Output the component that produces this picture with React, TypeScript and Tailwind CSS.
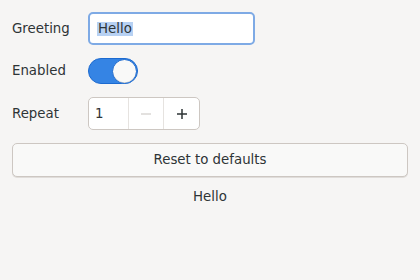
export default function App() {
  const font = { fontFamily: '"DejaVu Sans", sans-serif' };
  return (
    <div
      className="w-[420px] h-[280px] bg-[#f6f5f4] text-[#2e3436] text-[13.33px] px-3 pt-3"
      style={font}
    >
      <div className="grid grid-cols-[76px_1fr] gap-y-[13px] items-center">
        <span>Greeting</span>
        <div className="w-[167px] h-[33px] rounded-[5px] border-2 border-[#7eaae5] bg-white flex items-center pl-[7px]">
          <span className="bg-[#b7d1f3] leading-[14px] py-[0px] px-[1px]">Hello</span>
        </div>

        <span>Enabled</span>
        <div className="w-[50px] h-[26px] rounded-full bg-[#3584e4] border border-[#1c6ad0] flex items-center justify-end">
          <div className="w-[25px] h-[25px] rounded-full bg-[#f9f9f8] border border-[#1c6ad0] shadow-[inset_0_-1px_0_#d8d6d3]" />
        </div>

        <span>Repeat</span>
        <div className="w-[112px] h-[33px] rounded-[5px] border border-[#cdc7c2] bg-white flex">
          <div className="w-[40px] flex items-center pl-[6px] border-r border-[#e6e3e0]">1</div>
          <div className="w-[35px] flex items-center justify-center border-r border-[#e6e3e0]">
            <svg width="12" height="12" viewBox="0 0 12 12">
              <path d="M1 6h10" stroke="#dad7d4" strokeWidth="1.5" />
            </svg>
          </div>
          <div className="flex-1 flex items-center justify-center">
            <svg width="12" height="12" viewBox="0 0 12 12">
              <path d="M1 6h10M6 1v10" stroke="#2e3436" strokeWidth="1.5" />
            </svg>
          </div>
        </div>
      </div>

      <button className="mt-[13px] w-[396px] h-[34px] rounded-[5px] border border-[#cdc7c2] bg-[#f9f9f8] shadow-[0_1px_0_#e0ddda] flex items-center justify-center">
        Reset to defaults
      </button>

      <div className="mt-[10px] text-center">Hello</div>
    </div>
  );
}
